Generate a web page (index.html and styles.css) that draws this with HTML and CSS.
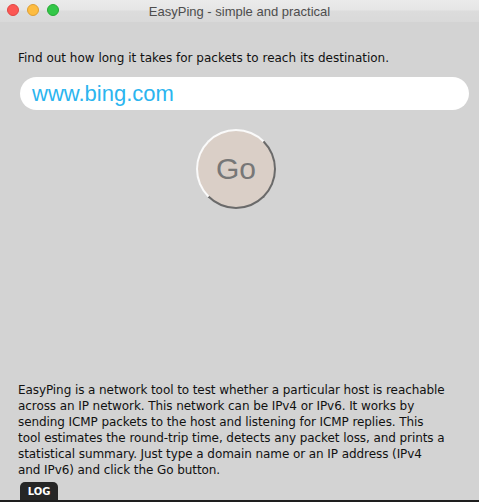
FILE: index.html
```html
<!DOCTYPE html>
<html>
<head>
<meta charset="utf-8">
<link rel="stylesheet" href="styles.css">
</head>
<body>
<div class="window">
  <div class="titlebar">
    <div class="lights">
      <span class="light red"></span>
      <span class="light yellow"></span>
      <span class="light green"></span>
    </div>
    <div class="title">EasyPing - simple and practical</div>
  </div>
  <div class="content">
    <p class="intro">Find out how long it takes for packets to reach its destination.</p>
    <div class="field">www.bing.com</div>
    <div class="go-wrap"><div class="go">Go</div></div>
    <div class="spacer"></div>
    <p class="desc">EasyPing is a network tool to test whether a particular host is reachable<br>across an IP network. This network can be IPv4 or IPv6. It works by<br>sending ICMP packets to the host and listening for ICMP replies. This<br>tool estimates the round-trip time, detects any packet loss, and prints a<br>statistical summary. Just type a domain name or an IP address (IPv4<br>and IPv6) and click the Go button.</p>
    <div class="tabs"><div class="tab">LOG</div></div>
  </div>
  <div class="bottom"></div>
</div>
</body>
</html>
```
FILE: styles.css
```css
html, body {
  margin: 0;
  padding: 0;
}
body {
  width: 479px;
  height: 502px;
  overflow: hidden;
  background: #d3d3d3;
}
.window {
  width: 479px;
  height: 502px;
  display: flex;
  flex-direction: column;
  background: #d3d3d3;
}
.titlebar {
  height: 22px;
  flex: none;
  position: relative;
  background: linear-gradient(#ebebeb, #e6e6e6 45%, #dcdcdc 50%, #d9d9d9);
  display: flex;
  align-items: center;
  justify-content: center;
}
.lights {
  position: absolute;
  left: 7px;
  top: 4px;
  display: flex;
  gap: 8px;
}
.light {
  width: 12px;
  height: 12px;
  border-radius: 50%;
  box-sizing: border-box;
}
.red { background: #fc5753; border: 1px solid #df4744; }
.yellow { background: #fdbc40; border: 1px solid #de9f34; }
.green { background: #33c748; border: 1px solid #27aa35; }
.title {
  font-family: "Liberation Sans", Arial, sans-serif;
  font-size: 13px;
  color: #4d4d4d;
}
.content {
  flex: 1;
  display: flex;
  flex-direction: column;
  padding: 0 10px 0 18px;
}
.intro {
  margin: 28px 0 0 0;
  font-family: "DejaVu Sans", sans-serif;
  font-size: 12px;
  line-height: 16px;
  color: #111;
}
.field {
  margin: 11px 0 0 2px;
  height: 33px;
  border-radius: 17px;
  background: #fff;
  box-sizing: border-box;
  padding-left: 12px;
  font-family: "Liberation Sans", Arial, sans-serif;
  font-size: 22px;
  line-height: 33px;
  color: #2bb5ef;
}
.go-wrap {
  display: flex;
  margin-top: 19px;
  padding-left: 178px;
}
.go {
  width: 80px;
  height: 80px;
  box-sizing: border-box;
  border-radius: 50%;
  border: 2px solid;
  border-color: #fafafa #6a6a6a #6a6a6a #fafafa;
  background: #dacfc7;
  display: flex;
  align-items: center;
  justify-content: center;
  font-family: "Liberation Sans", Arial, sans-serif;
  font-size: 30px;
  color: #777;
}
.spacer { flex: 1; }
.desc {
  margin: 0 -10px 4px 0;
  white-space: nowrap;
  letter-spacing: -0.08px;
  font-family: "DejaVu Sans", sans-serif;
  font-size: 12px;
  line-height: 16px;
  color: #111;
}
.tabs {
  display: flex;
  padding-left: 2px;
}
.tab {
  width: 38px;
  height: 18px;
  background: #262626;
  border-radius: 5px 5px 0 0;
  color: #fff;
  font-family: "DejaVu Sans", sans-serif;
  font-weight: bold;
  font-size: 10px;
  line-height: 19px;
  text-align: center;
}
.bottom {
  height: 2px;
  flex: none;
  background: #1e1e1e;
}
```
